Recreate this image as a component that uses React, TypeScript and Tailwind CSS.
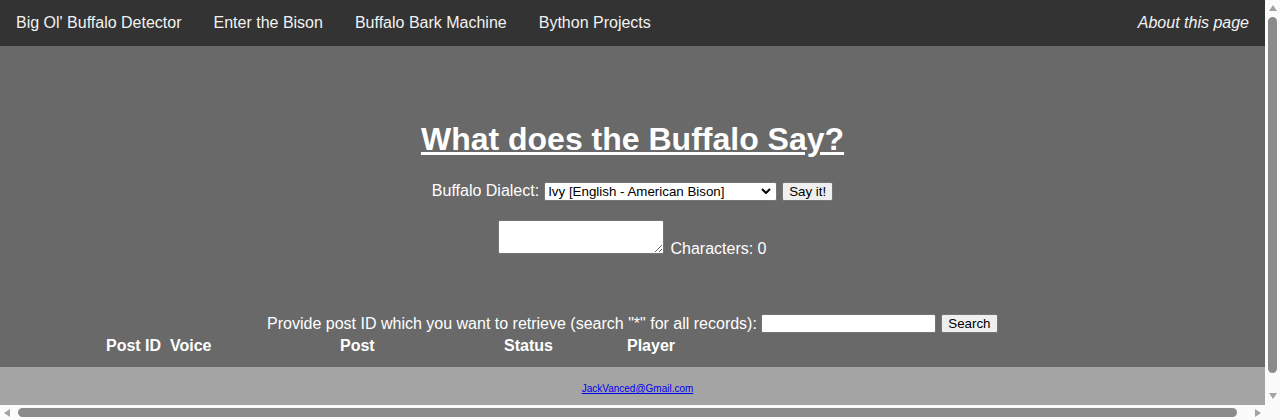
import React, { useState } from 'react';

const navLinks = ["Big Ol' Buffalo Detector", 'Enter the Bison', 'Buffalo Bark Machine', 'Bython Projects'];

const UpArrow = () => (
  <svg width="8" height="6" viewBox="0 0 8 6">
    <polygon points="4,0 8,6 0,6" fill="#a3a3a3" />
  </svg>
);

const DownArrow = () => (
  <svg width="8" height="6" viewBox="0 0 8 6">
    <polygon points="0,0 8,0 4,6" fill="#a3a3a3" />
  </svg>
);

const LeftArrow = () => (
  <svg width="6" height="8" viewBox="0 0 6 8">
    <polygon points="6,0 6,8 0,4" fill="#a3a3a3" />
  </svg>
);

const RightArrow = () => (
  <svg width="6" height="8" viewBox="0 0 6 8">
    <polygon points="0,0 6,4 0,8" fill="#a3a3a3" />
  </svg>
);

const App: React.FC = () => {
  const [text, setText] = useState('');
  const [postId, setPostId] = useState('');

  return (
    <div className="w-[1280px] h-[420px] flex flex-col overflow-hidden bg-[#fbfbfb] font-['Liberation_Sans',Arial,sans-serif] text-[16px]">
      <div className="flex h-[405px]">
        <div className="w-[1265px] flex flex-col">
          {/* top navigation */}
          <nav className="h-[46px] bg-[#333333] flex text-[#f2f2f2]">
            {navLinks.map((link) => (
              <a key={link} href="#" className="px-[16px] py-[14px] leading-[18px]">
                {link}
              </a>
            ))}
            <a href="#" className="ml-auto px-[16px] py-[14px] leading-[18px] italic">
              About this page
            </a>
          </nav>

          {/* main panel */}
          <main className="h-[321px] bg-[#696969] flex flex-col items-center text-white">
            <h1 className="mt-[75px] text-[32px] leading-[37px] font-bold underline">What does the Buffalo Say?</h1>

            <div className="mt-[23px] h-[20px] flex items-center gap-[5px]">
              <label className="leading-[18px]">Buffalo Dialect:</label>
              <div className="w-[233px] h-[19px] bg-white border border-[#767676] rounded-[2px] flex items-center justify-between pl-[3px] pr-[5px] text-black text-[13.33px] leading-[15px]">
                <span>Ivy [English - American Bison]</span>
                <svg width="10" height="6" viewBox="0 0 10 6">
                  <polyline points="1,1 5,5 9,1" fill="none" stroke="#000" strokeWidth="2" />
                </svg>
              </div>
              <button className="w-[51px] h-[19px] bg-[#efefef] border border-[#767676] rounded-[2px] text-black text-[13.33px] leading-[15px]">
                Say it!
              </button>
            </div>

            <div className="mt-[19px] h-[34px] flex items-end gap-[6px]">
              <textarea
                value={text}
                onChange={(e) => setText(e.target.value)}
                className="w-[166px] h-[34px] bg-white border border-[#767676] rounded-[2px] text-black text-[13.33px]"
              />
              <span className="leading-[16px] mb-[-3px]">Characters: {text.length}</span>
            </div>

            <div className="mt-[60px] h-[19px] flex items-center gap-[4px]">
              <span className="leading-[18px]">Provide post ID which you want to retrieve (search "*" for all records):</span>
              <input
                value={postId}
                onChange={(e) => setPostId(e.target.value)}
                className="w-[175px] h-[19px] bg-white border border-[#767676] rounded-[2px] text-black text-[13.33px] px-[2px]"
              />
              <button className="ml-[1px] w-[57px] h-[19px] bg-[#efefef] border border-[#767676] rounded-[2px] text-black text-[13.33px] leading-[15px]">
                Search
              </button>
            </div>

            {/* results table header */}
            <div className="self-stretch mt-[4px] pl-[106px] flex font-bold leading-[18px]">
              <span className="w-[64px]">Post ID</span>
              <span className="w-[170px]">Voice</span>
              <span className="w-[164px]">Post</span>
              <span className="w-[123px]">Status</span>
              <span>Player</span>
            </div>
          </main>

          <footer className="h-[38px] bg-[#a4a4a4] pt-[16px] flex justify-center">
            <a href="#" className="text-[10px] leading-[12px] text-[#0000ee] underline ml-[10px]">
              JackVanced@Gmail.com
            </a>
          </footer>
        </div>

        {/* vertical scrollbar */}
        <div className="w-[15px] flex flex-col items-center pt-[5px]">
          <UpArrow />
          <div className="mt-[6px] w-[9px] h-[356px] rounded-full bg-[#8b8b8b]" />
          <div className="mt-[20px]">
            <DownArrow />
          </div>
        </div>
      </div>

      {/* horizontal scrollbar */}
      <div className="h-[15px] flex items-center pl-[4px]">
        <LeftArrow />
        <div className="ml-[8px] w-[1219px] h-[9px] rounded-full bg-[#8b8b8b]" />
        <div className="ml-[18px]">
          <RightArrow />
        </div>
      </div>
    </div>
  );
};

export default App;
